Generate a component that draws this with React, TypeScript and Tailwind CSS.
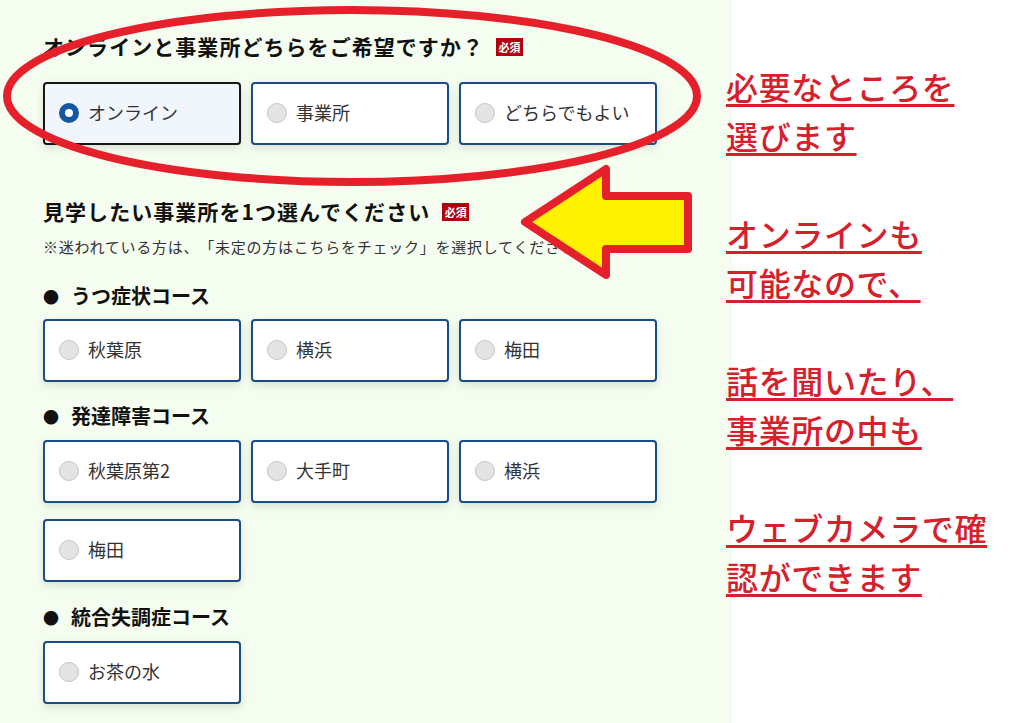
import React from 'react';

const jp = { fontFamily: '"Noto Sans CJK JP", "Noto Sans", sans-serif' };

const Badge = () => (
  <span className="ml-[12px] inline-flex h-[18px] w-[27px] items-center justify-center bg-[#b0000e] text-[11px] font-bold leading-none tracking-normal text-white">
    必須
  </span>
);

const Radio = ({ checked }: { checked?: boolean }) =>
  checked ? (
    <span className="box-border h-[20px] w-[20px] shrink-0 rounded-full border-[6px] border-[#1556a0] bg-white" />
  ) : (
    <span className="box-border h-[20px] w-[20px] shrink-0 rounded-full border border-[#c4c4c4] bg-[#e4e4e4]" />
  );

const Option = ({ label, checked }: { label: string; checked?: boolean }) => (
  <div
    className={
      'flex h-[63px] items-center gap-[9px] rounded-[4px] border-2 pb-[2px] pl-[14px] shadow-[0_3px_8px_rgba(0,0,0,0.12)] ' +
      (checked ? 'border-[#161616] bg-[#f1f6fc]' : 'border-[#1a4d85] bg-white')
    }
  >
    <Radio checked={checked} />
    <span className="text-[18px] text-[#333]">{label}</span>
  </div>
);

const Grid = ({ children, className = '' }: { children: React.ReactNode; className?: string }) => (
  <div className={'grid grid-cols-[198px_198px_198px] gap-x-[10px] gap-y-[16px] ' + className}>{children}</div>
);

const Course = ({ title, className = '' }: { title: string; className?: string }) => (
  <div className={'flex h-[28px] items-center text-[20px] font-bold text-[#111] ' + className}>
    <span className="mr-[12px] text-[16px]">●</span>
    {title}
  </div>
);

const notes = [
  '必要なところを',
  '選びます',
  '',
  'オンラインも',
  '可能なので、',
  '',
  '話を聞いたり、',
  '事業所の中も',
  '',
  'ウェブカメラで確',
  '認ができます',
];

export default function App() {
  return (
    <div
      className="relative flex h-[723px] w-[1027px] overflow-hidden bg-white [text-spacing-trim:space-all]"
      style={jp}
    >
      <div className="w-[732px] shrink-0 bg-[#f5fdf0] pl-[43px] pt-[33px]">
        <div className="flex h-[28px] items-center text-[21px] font-bold tracking-[0.05em] text-[#111]">
          オンラインと事業所どちらをご希望ですか？
          <Badge />
        </div>
        <Grid className="mt-[21px]">
          <Option label="オンライン" checked />
          <Option label="事業所" />
          <Option label="どちらでもよい" />
        </Grid>

        <div className="mt-[53px] flex h-[28px] items-center text-[21px] font-bold tracking-[0.05em] text-[#111]">
          見学したい事業所を1つ選んでください
          <Badge />
        </div>
        <p className="mt-[9px] h-[24px] whitespace-nowrap text-[15px] leading-[24px] tracking-[0.05em] text-[#333]">
          ※迷われている方は、「未定の方はこちらをチェック」を選択してください。
        </p>

        <Course title="うつ症状コース" className="mt-[23px]" />
        <Grid className="mt-[9px]">
          <Option label="秋葉原" />
          <Option label="横浜" />
          <Option label="梅田" />
        </Grid>

        <Course title="発達障害コース" className="mt-[20px]" />
        <Grid className="mt-[10px]">
          <Option label="秋葉原第2" />
          <Option label="大手町" />
          <Option label="横浜" />
          <Option label="梅田" />
        </Grid>

        <Course title="統合失調症コース" className="mt-[21px]" />
        <Grid className="mt-[10px]">
          <Option label="お茶の水" />
        </Grid>
      </div>

      <div className="relative z-10 -ml-[6px] pt-[62px] text-[32px] font-medium leading-[49px] tracking-[0.02em] text-[#d6202c]">
        {notes.map((line, i) =>
          line ? (
            <div key={i} className="whitespace-nowrap">
              <span className="underline decoration-[3px] underline-offset-[4px]">{line}</span>
            </div>
          ) : (
            <div key={i} className="h-[49px]" />
          )
        )}
      </div>

      <svg
        className="pointer-events-none absolute left-0 top-0 z-20"
        width="1027"
        height="723"
        viewBox="0 0 1027 723"
      >
        <ellipse cx="352" cy="96" rx="345" ry="86" fill="none" stroke="#e5202a" strokeWidth="8" />
        <polygon
          points="525,222 606,169 606,196 688,196 688,249 606,249 606,275"
          fill="#fff200"
          stroke="#e5202a"
          strokeWidth="8"
          strokeLinejoin="round"
        />
      </svg>
    </div>
  );
}
